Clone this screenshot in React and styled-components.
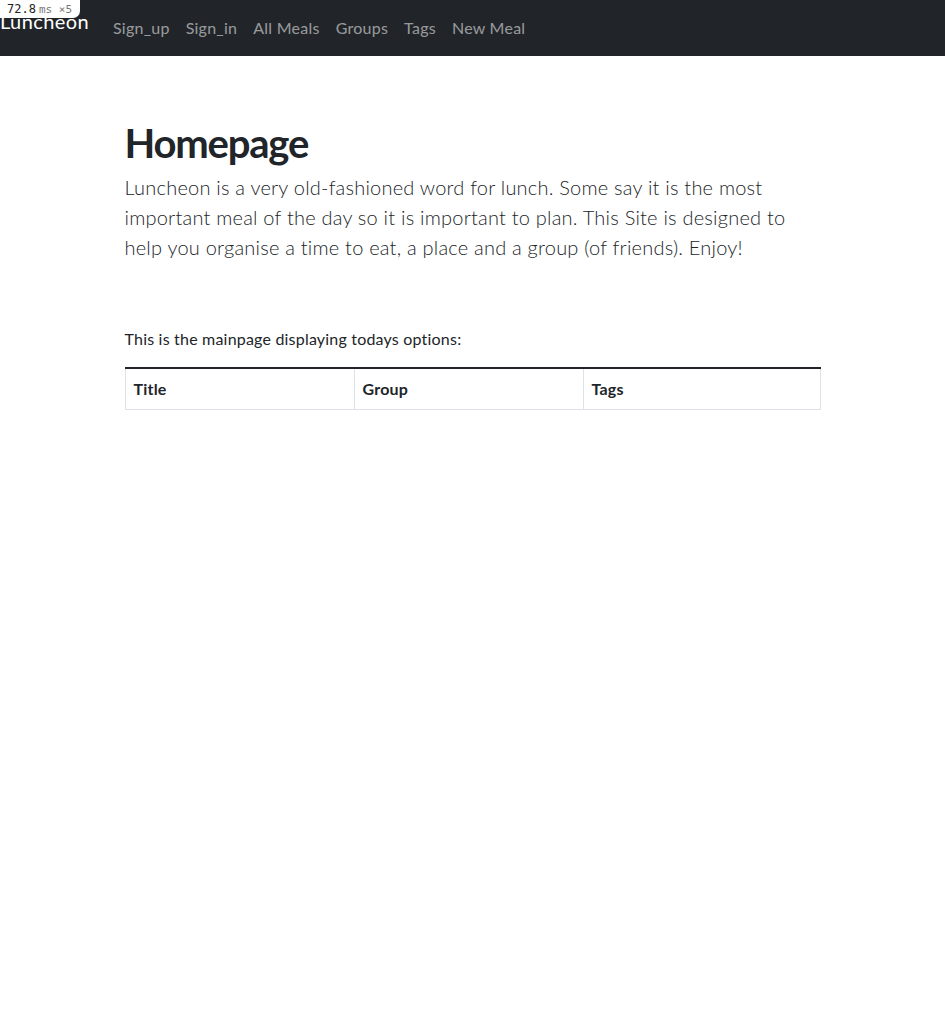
import React from "react";
import styled, { createGlobalStyle } from "styled-components";

const Global = createGlobalStyle`
  html, body { margin: 0; padding: 0; background: #fff; }
  body {
    font-family: Lato, "Noto Sans", sans-serif;
    color: #212529;
    font-size: 16px;
    line-height: 1.5;
    letter-spacing: 0.2px;
  }
  * { box-sizing: border-box; }
`;

const Navbar = styled.nav`
  position: relative;
  height: 56px;
  background: #212529;
  display: flex;
  align-items: flex-start;
`;

const Brand = styled.a`
  color: #fff;
  font-size: 20px;
  line-height: 30px;
  padding-top: 6px;
  margin-right: 16px;
  letter-spacing: 0.4px;
  text-decoration: none;
  white-space: nowrap;
`;

const NavLinks = styled.ul`
  list-style: none;
  margin: 0;
  padding: 16px 0 0;
  display: flex;
`;

const NavLink = styled.a`
  display: block;
  padding: 0 8px;
  color: rgba(255, 255, 255, 0.55);
  font-size: 16px;
  line-height: 24px;
  letter-spacing: 0.25px;
  text-decoration: none;
`;

const TimingBadge = styled.div`
  position: absolute;
  top: 0;
  left: 0;
  width: 80px;
  height: 18px;
  background: #fff;
  border-bottom-right-radius: 7px;
  font-family: "DejaVu Sans Mono", monospace;
  font-size: 12px;
  line-height: 18px;
  padding-left: 7px;
  color: #222;
  letter-spacing: 0;
  white-space: nowrap;
`;

const Unit = styled.span`
  color: #777;
  font-size: 11px;
  margin-left: 3px;
`;

const Container = styled.main`
  width: 720px;
  margin: 0 auto;
  padding: 60px 12px 0;
`;

const Title = styled.h1`
  margin: 0 0 5px;
  padding-top: 3px;
  font-size: 40px;
  line-height: 48px;
  font-weight: 700;
  letter-spacing: -1.2px;
`;

const Lead = styled.p`
  margin: 0 0 16px;
  font-size: 20px;
  line-height: 30px;
  font-weight: 300;
  letter-spacing: 0.22px;
`;

const Intro = styled.p`
  margin: 65px 0 16px;
  font-size: 16px;
  line-height: 24px;
`;

const Table = styled.table`
  width: 100%;
  border-collapse: collapse;
  border-top: 2px solid #212529;
`;

const Th = styled.th`
  text-align: left;
  padding: 8px;
  font-weight: 700;
  line-height: 24px;
  border: 1px solid #dee2e6;
  border-top: none;
  width: ${(p) => p.$w || "auto"};
`;

export default function App() {
  const links = ["Sign_up", "Sign_in", "All Meals", "Groups", "Tags", "New Meal"];
  return (
    <>
      <Global />
      <Navbar>
        <Brand href="#">Luncheon</Brand>
        <NavLinks>
          {links.map((l) => (
            <li key={l}>
              <NavLink href="#">{l}</NavLink>
            </li>
          ))}
        </NavLinks>
        <TimingBadge>
          72.8<Unit>ms ×5</Unit>
        </TimingBadge>
      </Navbar>
      <Container>
        <Title>Homepage</Title>
        <Lead>
          Luncheon is a very old-fashioned word for lunch. Some say it is the most
          important meal of the day so it is important to plan. This Site is designed
          to help you organise a time to eat, a place and a group (of friends). Enjoy!
        </Lead>
        <Intro>This is the mainpage displaying todays options:</Intro>
        <Table>
          <thead>
            <tr>
              <Th $w="229px">Title</Th>
              <Th $w="229px">Group</Th>
              <Th>Tags</Th>
            </tr>
          </thead>
        </Table>
      </Container>
    </>
  );
}
